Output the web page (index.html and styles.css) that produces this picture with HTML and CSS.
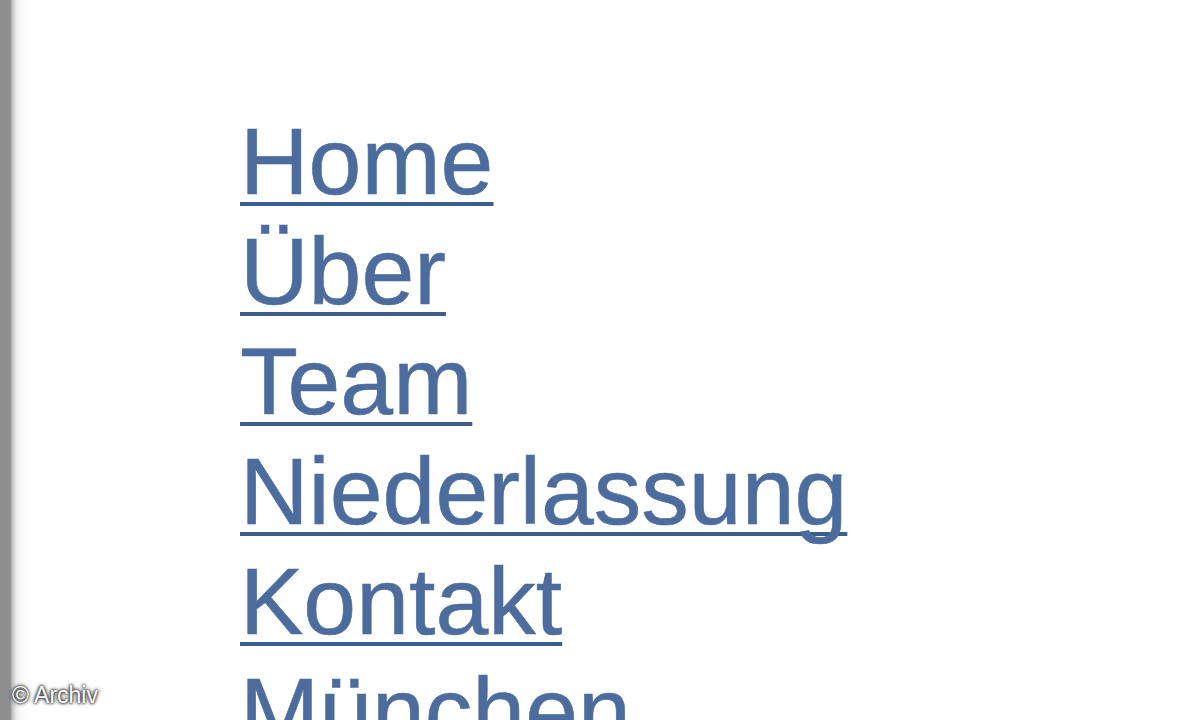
FILE: index.html
```html
<!DOCTYPE html>
<html lang="de">
<head>
<meta charset="utf-8">
<title>Navigation</title>
<link rel="stylesheet" href="styles.css">
</head>
<body>
<div class="page">
  <div class="edge"></div>
  <main class="content">
    <ul class="nav">
      <li><a href="#">Home</a></li>
      <li><a href="#">Über</a></li>
      <li><a href="#">Team</a></li>
      <li><a href="#">Niederlassung</a></li>
      <li><a href="#">Kontakt</a></li>
      <li><a href="#">München</a></li>
    </ul>
  </main>
  <div class="credit">© Archiv</div>
</div>
</body>
</html>
```
FILE: styles.css
```css
html, body {
  margin: 0;
  padding: 0;
  background: #fff;
}
.page {
  position: relative;
  width: 1200px;
  height: 720px;
  overflow: hidden;
  display: flex;
  font-family: "Liberation Sans", Arial, sans-serif;
}
.edge {
  width: 30px;
  flex: none;
  background: linear-gradient(to right, #8e8e8e 0, #8e8e8e 10px, #bdbdbd 12px, #ececec 16px, #fafafa 22px, #fff 30px);
}
.content {
  flex: 1;
}
.nav {
  list-style: none;
  margin: 0;
  padding: 106px 0 0 210px;
  font-size: 95px;
  line-height: 110px;
}
.nav a {
  color: #4d6c9e;
  text-decoration: underline;
  text-decoration-color: #3d5d8c;
  text-decoration-thickness: 4px;
  text-underline-offset: 8px;
  text-decoration-skip-ink: none;
  -webkit-text-stroke: 0.6px #4d6c9e;
}
.credit {
  position: absolute;
  left: 12px;
  bottom: 11px;
  color: #fff;
  font-size: 23px;
  text-shadow: 0 0 4px #222, 0 0 3px #333, 0 0 2px #444;
}
```
